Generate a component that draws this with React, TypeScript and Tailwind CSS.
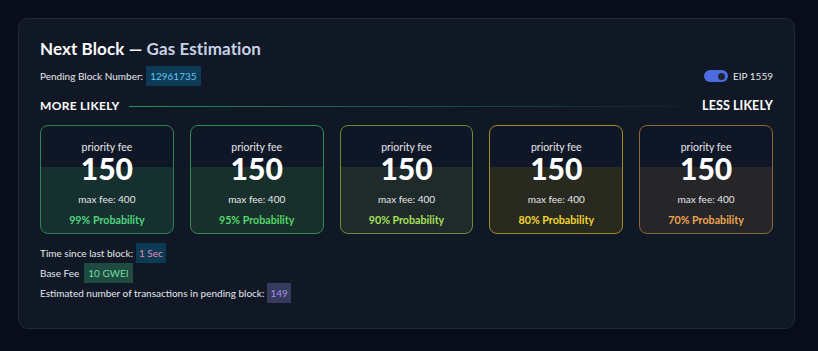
import React from "react";

const cards = [
  { p: "99%", border: "border-[#2f8055]", bg: "bg-[linear-gradient(to_bottom,#0f1726_41px,#16302f_41px)]", text: "text-[#4fd67f]" },
  { p: "95%", border: "border-[#2f8a4f]", bg: "bg-[linear-gradient(to_bottom,#0f1726_41px,#18302c_41px)]", text: "text-[#52d86a]" },
  { p: "90%", border: "border-[#6c8a3a]", bg: "bg-[linear-gradient(to_bottom,#0f1726_41px,#1f2b2a_41px)]", text: "text-[#a8e05a]" },
  { p: "80%", border: "border-[#a08a22]", bg: "bg-[linear-gradient(to_bottom,#0f1726_41px,#28291f_41px)]", text: "text-[#f5d62e]" },
  { p: "70%", border: "border-[#8a6838]", bg: "bg-[linear-gradient(to_bottom,#0f1726_41px,#262628_41px)]", text: "text-[#efa452]" },
];

export default function App() {
  return (
    <div
      className="w-[818px] h-[351px] bg-[#070e19] p-[18px] pr-[23px] text-white"
      style={{ fontFamily: "Lato, 'Noto Sans', sans-serif" }}
    >
      <div className="h-[311px] rounded-[10px] border border-[#1f2937] bg-[#101826] px-[21px] pt-[18px]">
        <h1 className="text-[17px] font-bold leading-[24px] tracking-[0.1px]">
          Next Block — <span className="text-[#c7d2e6]">Gas Estimation</span>
        </h1>
        <div className="mt-[5px] flex items-center justify-between h-[20px]">
          <div className="flex items-center text-[10px] text-[#e5e7eb]">
            <span>Pending Block Number:</span>
            <span className="ml-[3px] bg-[#0b3a55] text-[#62c6f2] px-[4px] h-[20px] leading-[20px]">12961735</span>
          </div>
          <div className="flex items-center text-[10px] text-[#e5e7eb]">
            <div className="w-[24px] h-[12px] rounded-full bg-[#4a6ce0] flex items-center justify-end pr-[3px]">
              <div className="w-[7px] h-[7px] rounded-full bg-[#1e2433]" />
            </div>
            <span className="ml-[5px]">EIP 1559</span>
          </div>
        </div>
        <div className="mt-[10px] flex items-center h-[20px]">
          <span className="text-[12px] font-bold tracking-[0.3px]">MORE LIKELY</span>
          <div className="ml-[9px] mr-[22px] flex-1 h-[1px] bg-gradient-to-r from-[#2c8a63] to-[#10222a]" />
          <span className="text-[12.5px] font-bold tracking-[0.1px]">LESS LIKELY</span>
        </div>
        <div className="mt-[9px] grid grid-cols-5 gap-[16px]">
          {cards.map((c) => (
            <div
              key={c.p}
              className={`h-[109px] rounded-[8px] border ${c.border} ${c.bg} flex flex-col items-center pt-[14px]`}
            >
              <span className="text-[10.5px] leading-[14px] text-[#e5e7eb]">priority fee</span>
              <span className="mt-[3px] text-[30px] font-black leading-[22px]">150</span>
              <span className="mt-[13px] text-[10px] leading-[14px] text-[#e5e7eb]">max fee: 400</span>
              <span className={`mt-[7px] text-[10.7px] font-bold leading-[14px] ${c.text}`}>{c.p} Probability</span>
            </div>
          ))}
        </div>
        <div className="mt-[9px] flex flex-col text-[10px] text-[#e5e7eb]">
          <div className="flex items-center h-[20px]">
            <span>Time since last block:</span>
            <span className="ml-[3px] bg-[#0b3a55] text-[#e58bb4] px-[3px] h-[20px] leading-[20px]">1 Sec</span>
          </div>
          <div className="flex items-center h-[20px]">
            <span>Base Fee</span>
            <span className="ml-[5px] bg-[#1e4a40] text-[#6fdca0] px-[4px] h-[20px] leading-[20px]">10 GWEI</span>
          </div>
          <div className="flex items-center h-[20px]">
            <span>Estimated number of transactions in pending block:</span>
            <span className="ml-[3px] bg-[#363a5c] text-[#a890e8] px-[3px] h-[20px] leading-[20px]">149</span>
          </div>
        </div>
      </div>
    </div>
  );
}
